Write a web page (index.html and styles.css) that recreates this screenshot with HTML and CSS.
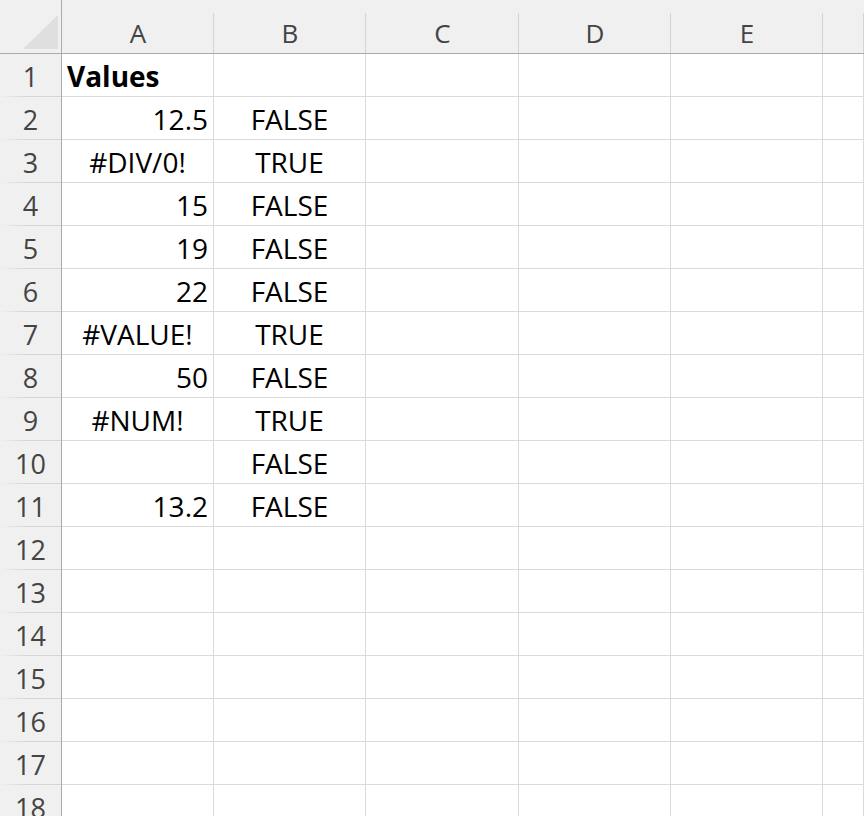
FILE: index.html
```html
<!DOCTYPE html>
<html lang="en">
<head>
	<meta charset="UTF-8">
	<title>Sheet1</title>
	<link rel="stylesheet" href="styles.css">
</head>
<body>
	<div class="sheet">
		<div class="corner">
			<svg width="35" height="34" viewBox="0 0 35 34"><polygon points="35,0 35,34 0,34" fill="#dfdfdf"/></svg>
		</div>
		<div class="col">A</div>
		<div class="col">B</div>
		<div class="col">C</div>
		<div class="col">D</div>
		<div class="col">E</div>
		<div class="col"></div>
	</div>
	<script>
		var data = [
			['Values', ''],
			['12.5', 'FALSE'],
			['#DIV/0!', 'TRUE'],
			['15', 'FALSE'],
			['19', 'FALSE'],
			['22', 'FALSE'],
			['#VALUE!', 'TRUE'],
			['50', 'FALSE'],
			['#NUM!', 'TRUE'],
			['', 'FALSE'],
			['13.2', 'FALSE']
		];

		function cell(cls, text) {
			var d = document.createElement('div');
			d.className = cls;
			d.textContent = text;
			return d;
		}

		var sheet = document.querySelector('.sheet');
		for(var r = 0; r < 18; r ++) {
			var row = data[r] || ['', ''];
			sheet.appendChild(cell('row', r + 1));
			var a = row[0], cls = 'cell';
			if(r == 0) cls += ' bold';
			else if(a.charAt(0) == '#') cls += ' center';
			else if(a != '') cls += ' num';
			sheet.appendChild(cell(cls, a));
			sheet.appendChild(cell('cell center', row[1]));
			for(var c = 0; c < 4; c ++) {
				sheet.appendChild(cell('cell', ''));
			}
		}
	</script>
</body>
</html>
```
FILE: styles.css
```css
*{
	padding:0;
	margin:0;
	box-sizing: border-box;
}
html, body{
	height: 100%;
	overflow: hidden;
	background: #fff;
}
.sheet{
	display: grid;
	grid-template-columns: 62px 152px 152px 153px 152px 152px 1fr;
	grid-template-rows: 54px;
	grid-auto-rows: 43px;
	font-family: "Open Sans", "Noto Sans", sans-serif;
}
.corner{
	display: flex;
	justify-content: flex-end;
	align-items: flex-end;
	padding: 0 3px 4px 0;
	background: #f0f0f0;
	border-right: 1px solid #ababab;
	border-bottom: 1px solid #ababab;
}
.corner svg{
	display: block;
}
.col{
	display: flex;
	justify-content: center;
	align-items: flex-end;
	padding-bottom: 2px;
	font-size: 26px;
	color: #444;
	background: #f0f0f0 linear-gradient(#d4d4d4, #d4d4d4) right bottom / 1px 40px no-repeat;
	border-bottom: 1px solid #ababab;
}
.col:last-child{
	background: #f0f0f0;
}
.row{
	display: flex;
	justify-content: center;
	align-items: flex-end;
	padding-bottom: 2px;
	font-size: 27px;
	color: #444;
	background: #f0f0f0 linear-gradient(to right, #f0f0f0, #d6d6d6 40%) left bottom / 100% 1px no-repeat;
	border-right: 1px solid #ababab;
}
.cell{
	display: flex;
	align-items: flex-end;
	padding: 0 5px 1px;
	font-size: 28px;
	color: #000;
	white-space: nowrap;
	border-right: 1px solid #dadada;
	border-bottom: 1px solid #dadada;
}
.cell.num{
	justify-content: flex-end;
}
.cell.center{
	justify-content: center;
}
.cell.bold{
	font-weight: bold;
}
```
